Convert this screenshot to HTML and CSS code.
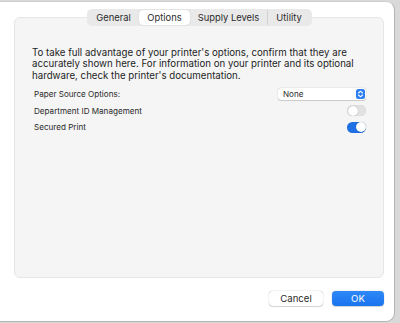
FILE: index.html
```html
<!DOCTYPE html>
<html lang="en">
<head>
    <title>Printer Options</title>
    <meta charset="utf-8">
    <meta name="viewport" content="width=device-width, initial-scale=1">
    <link rel="stylesheet" href="styles.css">
</head>
<body>
<div class="window">
    <div class="tabs">
        <span class="tab">General</span>
        <span class="tab tab-active">Options</span>
        <span class="tab">Supply Levels</span>
        <span class="tab tab-last">Utility</span>
    </div>
    <div class="panel">
        <p class="intro">To take full advantage of your printer's options, confirm that they are accurately shown here. For information on your printer and its optional hardware, check the printer's documentation.</p>
        <div class="row">
            <span class="row-title">Paper Source Options:</span>
            <div class="popup">
                <span>None</span>
                <span class="popup-arrows">
                    <svg width="7" height="8" viewBox="0 0 7 8"><path d="M1.5 3 L3.5 1.2 L5.5 3 M1.5 5 L3.5 6.8 L5.5 5" fill="none" stroke="#fff" stroke-width="1.1" stroke-linecap="round" stroke-linejoin="round"/></svg>
                </span>
            </div>
        </div>
        <div class="row">
            <span class="row-title">Department ID Management</span>
            <span class="switch"></span>
        </div>
        <div class="row">
            <span class="row-title">Secured Print</span>
            <span class="switch switch-on"></span>
        </div>
    </div>
    <div class="actions">
        <button class="button" type="button">Cancel</button>
        <button class="button button-blue" type="button">OK</button>
    </div>
</div>
</body>
</html>
```

FILE: styles.css
```css
*, *::before, *::after {
    margin: 0;
    padding: 0;
    box-sizing: border-box;
}

body {
    width: 400px;
    height: 323px;
    overflow: hidden;
    background-color: #d9d9d9;
    font-family: "Inter", "Liberation Sans", sans-serif;
    color: #262626;
}

.window {
    width: 395px;
    height: 321px;
    margin-top: 1px;
    padding-top: 7px;
    border-right: 1px solid #b4b4b4;
    border-bottom: 1px solid #b4b4b4;
    border-top: 1px solid #d0d0d0;
    border-radius: 0 9px 9px 0;
    background-color: #ffffff;
}

.tabs {
    position: relative;
    z-index: 1;
    display: flex;
    width: 225px;
    height: 17px;
    margin-left: 87px;
    padding: 1px;
    border-radius: 5px;
    background-color: #e9e9e9;
}

.tab {
    display: flex;
    align-items: center;
    justify-content: center;
    height: 15px;
    font-size: 9.4px;
    color: #2a2a2a;
    border-right: 1px solid #d2d2d2;
}

.tab:nth-child(1) { width: 51px; }
.tab:nth-child(2) { width: 51px; }
.tab:nth-child(3) { width: 78px; }
.tab:nth-child(4) { width: 42px; }

.tab-active {
    border-radius: 4px;
    border-right: none;
    background-color: #ffffff;
    box-shadow: 0 0 1px rgba(0, 0, 0, 0.25);
}

.tab:first-child {
    border-right: none;
}

.tab-last {
    border-right: none;
}

.panel {
    width: 370px;
    height: 261px;
    margin-top: -9px;
    margin-left: 14px;
    padding: 29px 17px 0 17px;
    border: 1px solid #e6e6e6;
    border-radius: 6px;
    background-color: #f5f5f5;
}

.intro {
    font-size: 9.7px;
    line-height: 11.4px;
    color: #1e1e1e;
    margin-bottom: 5px;
}

.row {
    display: flex;
    align-items: center;
    justify-content: space-between;
    height: 16.5px;
    padding-left: 2px;
}

.row-title {
    font-size: 8.1px;
    color: #2a2a2a;
}

.popup {
    display: flex;
    align-items: center;
    justify-content: space-between;
    width: 88px;
    height: 12px;
    padding: 0 1px 0 5px;
    border-radius: 3px;
    background-color: #ffffff;
    box-shadow: 0 0 1px rgba(0, 0, 0, 0.3), 0 0.5px 1px rgba(0, 0, 0, 0.15);
    font-size: 8.1px;
    color: #2a2a2a;
}

.popup-arrows {
    display: flex;
    align-items: center;
    justify-content: center;
    width: 9px;
    height: 10px;
    border-radius: 2.5px;
    background-color: #2b7ef3;
}

.switch {
    position: relative;
    width: 19px;
    height: 11px;
    border-radius: 6px;
    background-color: #e2e2e2;
    box-shadow: inset 0 0 1px rgba(0, 0, 0, 0.15);
}

.switch::after {
    content: "";
    position: absolute;
    top: 0.5px;
    left: 0.5px;
    width: 10px;
    height: 10px;
    border-radius: 50%;
    background-color: #ffffff;
    box-shadow: 0 0 1px rgba(0, 0, 0, 0.35);
}

.switch-on {
    background-color: #1f6fe5;
}

.switch-on::after {
    left: 8.5px;
}

.actions {
    display: flex;
    justify-content: flex-end;
    gap: 9px;
    margin-top: 13px;
    padding-right: 10px;
}

.button {
    width: 54px;
    height: 15px;
    border: none;
    border-radius: 4px;
    background-color: #ffffff;
    box-shadow: 0 0 1px rgba(0, 0, 0, 0.35), 0 0.5px 1px rgba(0, 0, 0, 0.15);
    font-family: inherit;
    font-size: 9.6px;
    color: #2a2a2a;
}

.button-blue {
    width: 52px;
    background: linear-gradient(#2f88f7, #1a74ee);
    color: #ffffff;
}
```
